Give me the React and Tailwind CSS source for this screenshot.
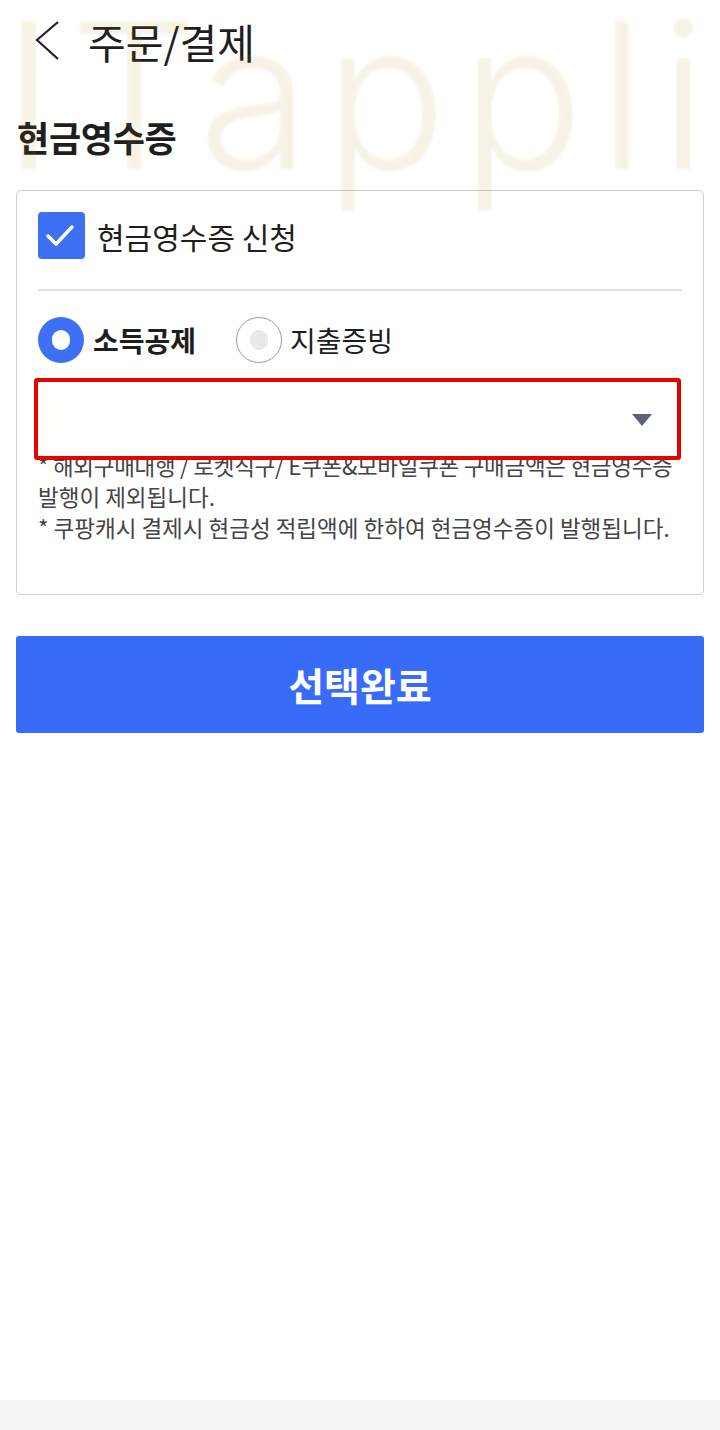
import { useState } from 'react';

const font = { fontFamily: '"Noto Sans CJK KR", "Noto Sans", sans-serif' };

export default function App() {
  const [agree, setAgree] = useState(true);
  const [type, setType] = useState('income');

  return (
    <div className="relative flex h-[1430px] w-full flex-col overflow-hidden bg-white text-[#1e1e1e]" style={font}>
      {/* Header */}
      <div className="flex h-[82px] items-center">
        <button className="ml-[33px] flex h-[44px] w-[28px] items-center justify-center">
          <svg width="26" height="44" viewBox="0 0 26 44" fill="none">
            <path d="M24 3 L3 21 L24 40" stroke="#222" strokeWidth="2.2" strokeLinejoin="miter" />
          </svg>
        </button>
        <h1 className="ml-[27px] text-[41px] leading-none font-normal">주문/결제</h1>
      </div>

      {/* Section title */}
      <h2 className="mt-[35px] ml-[17px] h-[40px] text-[35px] leading-[40px] font-bold tracking-[-0.3px]">현금영수증</h2>

      {/* Card */}
      <div className="mx-[16px] mt-[33px] rounded-[5px] border-[1.5px] border-[#cfcfcf] px-[21px] pt-[21px] pb-[51px]">
        <label className="flex h-[47px] items-center" onClick={() => setAgree(!agree)}>
          <span className={`flex h-[47px] w-[47px] items-center justify-center rounded-[4px] ${agree ? 'bg-[#3d70f2]' : 'border-2 border-[#999]'}`}>
            {agree && (
              <svg width="47" height="47" viewBox="0 0 47 47" fill="none">
                <path d="M10 24 L18 32 L34 15" stroke="#fff" strokeWidth="3.5" strokeLinecap="round" strokeLinejoin="round" />
              </svg>
            )}
          </span>
          <span className="ml-[12px] text-[30px] leading-none">현금영수증 신청</span>
        </label>

        <div className="mt-[30px] h-[2px] bg-[#e2e2e2]" />

        <div className="mt-[26px] flex h-[46px] items-center">
          <button className="flex items-center" onClick={() => setType('income')}>
            <span className={`flex h-[46px] w-[46px] items-center justify-center rounded-full ${type === 'income' ? 'bg-[#3d70f2]' : 'border-[1.5px] border-[#9a9a9a]'}`}>
              <span className={`h-[20px] w-[18px] rounded-full ${type === 'income' ? 'bg-white' : 'bg-[#e9e9e9]'}`} />
            </span>
            <span className={`ml-[9px] text-[28px] leading-none ${type === 'income' ? 'font-bold' : 'font-normal'}`}>소득공제</span>
          </button>
          <button className="ml-[40px] flex items-center" onClick={() => setType('proof')}>
            <span className={`flex h-[46px] w-[46px] items-center justify-center rounded-full ${type === 'proof' ? 'bg-[#3d70f2]' : 'border-[1.5px] border-[#9a9a9a]'}`}>
              <span className={`h-[20px] w-[18px] rounded-full ${type === 'proof' ? 'bg-white' : 'bg-[#e9e9e9]'}`} />
            </span>
            <span className={`ml-[8px] text-[28px] leading-none ${type === 'proof' ? 'font-bold' : 'font-normal'}`}>지출증빙</span>
          </button>
        </div>

        {/* Select box */}
        <div className="relative z-10 mt-[15px] ml-[-4px] flex h-[82px] w-[647px] items-center justify-end rounded-[3px] border-4 border-[#e60000] bg-[#fffffd] pr-[25px] pt-[2px]">
          <svg width="20" height="12" viewBox="0 0 20 12">
            <path d="M0 0 H20 L10 12 Z" fill="#5d6470" />
          </svg>
        </div>

        <div className="relative mt-[-10px] text-[22.5px] leading-[31px] whitespace-nowrap text-[#444]">
          <p className="tracking-[-0.3px]">* 해외구매대행 / 로켓직구/ E쿠폰&amp;모바일쿠폰 구매금액은 현금영수증</p>
          <p>발행이 제외됩니다.</p>
          <p>* 쿠팡캐시 결제시 현금성 적립액에 한하여 현금영수증이 발행됩니다.</p>
        </div>
      </div>

      {/* Submit */}
      <button className="mx-[16px] mt-[41px] flex h-[97px] items-center justify-center rounded-[3px] bg-[#386cf8] text-[39px] font-bold text-white">
        선택완료
      </button>

      <div className="flex-1" />
      <div className="h-[30px] bg-[#f5f5f7]" />

      {/* Watermark */}
      <div
        className="pointer-events-none absolute top-[-8px] left-[2px] z-20 text-[204px] leading-none font-light tracking-[14px] whitespace-nowrap text-[rgba(255,196,0,0.065)] [text-shadow:0_2px_3px_rgba(0,0,0,0.035)]"
        style={{ fontFamily: 'Inter, sans-serif' }}
      >
        ITappli
      </div>
    </div>
  );
}
